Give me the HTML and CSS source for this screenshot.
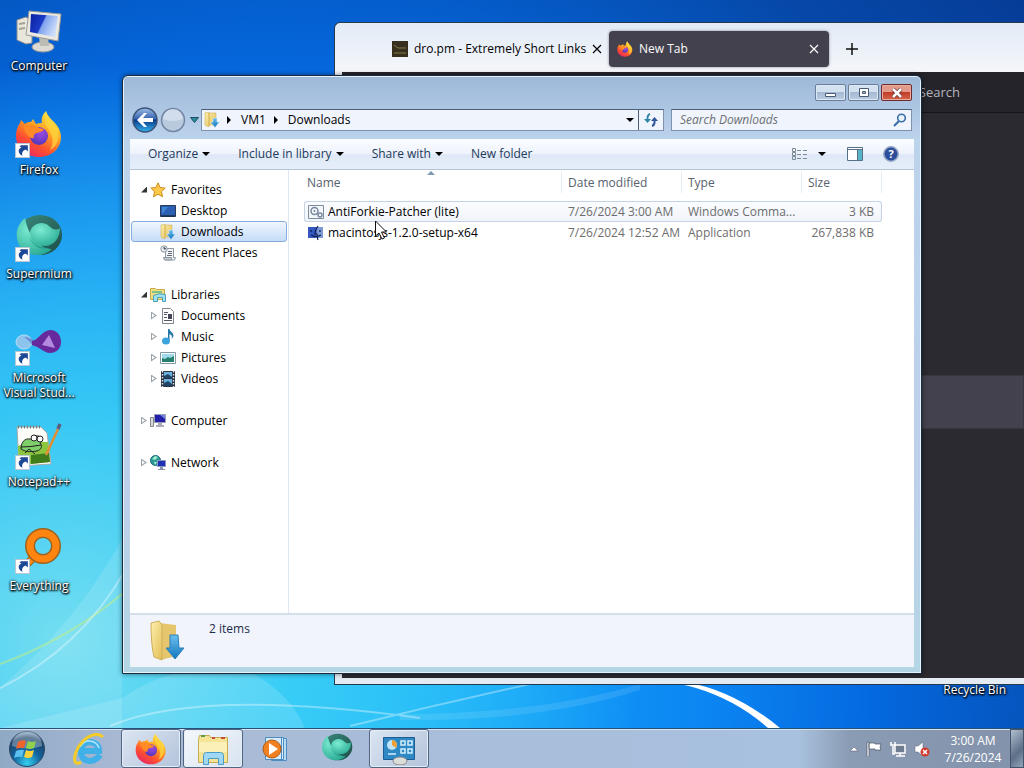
FILE: index.html
```
<!DOCTYPE html>
<html lang="en">
<head>
  <meta charset="UTF-8">
  <title>Downloads</title>
  <link rel="stylesheet" href="styles.css">
</head>
<body>
  <!-- shared icons -->
  <svg class="sprite" aria-hidden="true">
    <defs>
      <linearGradient id="g-fire" x1="0.8" y1="0" x2="0.2" y2="1">
        <stop offset="0" stop-color="#fff04a"/><stop offset="0.4" stop-color="#ffa022"/>
        <stop offset="0.7" stop-color="#ff4f30"/><stop offset="1" stop-color="#e5206c"/>
      </linearGradient>
      <radialGradient id="g-globe" cx="0.6" cy="0.3" r="0.8">
        <stop offset="0" stop-color="#a04be0"/><stop offset="1" stop-color="#4a35b8"/>
      </radialGradient>
      <radialGradient id="g-teal" cx="0.35" cy="0.3" r="0.8">
        <stop offset="0" stop-color="#7cecd2"/><stop offset="1" stop-color="#27a892"/>
      </radialGradient>
      <linearGradient id="g-dark" x1="0" y1="0" x2="1" y2="1">
        <stop offset="0" stop-color="#3a8a7c"/><stop offset="1" stop-color="#1d4c48"/>
      </linearGradient>
      <linearGradient id="g-folder" x1="0" y1="0" x2="1" y2="1">
        <stop offset="0" stop-color="#fdf0ae"/><stop offset="1" stop-color="#e3bd56"/>
      </linearGradient>
      <linearGradient id="g-arrow" x1="0" y1="0" x2="0" y2="1">
        <stop offset="0" stop-color="#6cc0ee"/><stop offset="1" stop-color="#1276c0"/>
      </linearGradient>
      <linearGradient id="g-screen" x1="0" y1="0" x2="1" y2="0.4">
        <stop offset="0" stop-color="#0a1fa0"/><stop offset="0.5" stop-color="#1c3cc8"/>
        <stop offset="0.55" stop-color="#7fa2ec"/><stop offset="1" stop-color="#c9dcfa"/>
      </linearGradient>
      <radialGradient id="g-orb" cx="0.5" cy="0.9" r="0.9">
        <stop offset="0" stop-color="#35d0f0"/><stop offset="0.45" stop-color="#12609c"/>
        <stop offset="0.8" stop-color="#1d4468"/><stop offset="1" stop-color="#8fb0cc"/>
      </radialGradient>
      <linearGradient id="g-back" x1="0" y1="0" x2="0" y2="1">
        <stop offset="0" stop-color="#9dbce6"/><stop offset="0.45" stop-color="#3564b0"/>
        <stop offset="0.5" stop-color="#0c3a8c"/><stop offset="1" stop-color="#30b4ee"/>
      </linearGradient>
    </defs>
    <symbol id="firefox" viewBox="0 0 48 48">
      <path fill="url(#g-fire)" d="M31 1c1 4 4 7 8 11 4 4 7 9 7 15 0 11-9 20-22 20S1 38 1 26c0-5 1-9 4-13l1-3 4 4c2-2 4-2 6-2l2-3 3 5c2-1 4-1 6-1-1-5 1-9 4-12z"/>
      <circle cx="24" cy="26" r="9" fill="url(#g-globe)"/>
      <path fill="#ff8a26" d="M8 16c5-2 12-2 16 2l5 1c-1 3-5 3-8 4-1 1-3 2-2 5-4 1-9-4-11-12z"/>
      <path fill="#ffd83e" opacity=".7" d="M31 3c1 5 9 9 12 17 2 8-1 17-8 20 3-5 4-12 0-18-3-5-7-10-4-19z"/>
    </symbol>
    <symbol id="supermium" viewBox="0 0 48 48">
      <ellipse cx="25" cy="21" rx="22" ry="20" fill="url(#g-dark)"/>
      <path fill="url(#g-teal)" d="M10 4c2 9 4 16 12 24 5 5 10 7 15 7-8 8-22 8-30 0C-1 26 0 12 10 4z"/>
      <path fill="url(#g-teal)" d="M15 18c2-8 12-12 19-6 3 3 7 5 11 2 0 10-6 18-15 18-10 0-15-6-15-14z"/>
      <path fill="#0d7768" opacity=".4" d="M13 20c3 9 12 16 22 12-6 6-18 2-22-12z"/>
    </symbol>
    <symbol id="shortcut" viewBox="0 0 14 14">
      <path fill="#fff" stroke="#b9c6d6" d="M.5.5h13v13H.5z"/>
      <path fill="#1b4796" d="M6 2h6v6l-2-2c-3 1-4 3-3 6-4-2-5-6-1-8L4 3z"/>
    </symbol>
    <symbol id="folder-down" viewBox="0 0 16 16">
      <path fill="url(#g-folder)" stroke="#c9a548" stroke-width=".5" d="M1 1l4-1v15l-4-2zM5 1h7v12H5z"/>
      <path fill="url(#g-arrow)" stroke="#e4f2fc" stroke-width=".5" d="M9 6h4v4h2.500l-4.500 5.500L6.500 10H9z"/>
    </symbol>
    <symbol id="computer" viewBox="0 0 48 48">
      <path fill="#e9e6dc" stroke="#8d8f92" d="M2 14l9-3 6 4v22l-6 1-9-4z"/>
      <path stroke="#a5a294" stroke-width="2" d="M4 18l6-1M4 23l6-1"/>
      <ellipse cx="28" cy="41" rx="11" ry="5" fill="#dcdad2" stroke="#999"/>
      <path fill="#bdbcb4" d="M24 31h9l1 9h-9z"/>
      <path fill="#ece9e0" stroke="#9a9a98" d="M14 5l32 3-3 27-32-6z"/>
      <path fill="url(#g-screen)" d="M16 8l27 2-3 21-25-5z"/>
    </symbol>
    <symbol id="close-x" viewBox="0 0 10 10">
      <path stroke="currentColor" stroke-width="1.200" d="M1 1l8 8M9 1L1 9"/>
    </symbol>
  </svg>

  <div class="desktop">
    <svg class="wallpaper" viewBox="0 0 1024 730" preserveAspectRatio="none" aria-hidden="true">
      <path fill="#fff" opacity=".12" d="M0 690Q80 620 122 540V730H0z"/>
      <path fill="#fff" opacity=".14" d="M122 700Q180 660 250 674Q290 695 305 730H0z"/>
      <path fill="none" stroke="#b8ec90" stroke-width="2" opacity=".6" d="M0 666Q70 640 124 594"/>
      <path fill="none" stroke="#fff" stroke-width="2" opacity=".35" d="M0 690Q80 650 124 574M110 728Q200 690 420 720M350 728Q440 706 530 686"/>
      <path fill="#fff" opacity=".1" d="M400 716Q540 716 640 686v6Q540 724 400 722z"/>
      <path fill="#fff" d="M668 684h18q48 8 94 46h-12q-32-28-72-40q-12-4-28-6z"/>
    </svg>

    <ul class="icons">
      <li><a class="icon" href="#"><svg class="icon-art"><use href="#computer"/></svg><span>Computer</span></a></li>
      <li><a class="icon" href="#"><svg class="icon-art"><use href="#firefox"/><use href="#shortcut" y="33" width="15" height="15"/></svg><span>Firefox</span></a></li>
      <li><a class="icon" href="#"><svg class="icon-art"><use href="#supermium"/><use href="#shortcut" y="33" width="15" height="15"/></svg><span>Supermium</span></a></li>
      <li><a class="icon" href="#">
        <svg class="icon-art" viewBox="0 0 48 48">
          <ellipse cx="9" cy="24" rx="8" ry="7" fill="#8cc4ee" stroke="#b4dcf6"/>
          <path fill="#6a8fd4" d="M9 19q8 0 13 7l-4 2q-4-6-9-9z"/>
          <path fill="#672a9c" d="M17 23c7-1 9-10 18-11 7 0 11 5 11 12s-5 11-11 11-10-6-18-8z"/>
          <path fill="#b48ae0" d="M34 17l-7 10 13 3z"/>
          <use href="#shortcut" y="33" width="15" height="15"/>
        </svg><span>Microsoft<br>Visual Stud...</span></a></li>
      <li><a class="icon" href="#">
        <svg class="icon-art" viewBox="0 0 48 48">
          <path fill="#fdfdfa" stroke="#a9a9a9" d="M2 5h24l6 6 4 31-32 2z"/>
          <path fill="#8cc63e" d="M3 24q15-5 30-4l2 20-31 3z"/>
          <path fill="#3f7d1c" d="M16 33l18-2 1 9-19 2z"/>
          <path stroke="#777" stroke-dasharray="1 2" stroke-width="3" d="M3 5h23"/>
          <path fill="#7fcf6a" stroke="#222" d="M6 27c0-9 6-12 12-9l3-4c5-1 6 4 4 7 3 3 1 7-3 8-8 1-11 1-16-2z"/>
          <path fill="none" stroke="#222" d="M6 25q10 0 20-2M10 31l4-4 6 5"/>
          <circle cx="19" cy="16" r="3" fill="#fff" stroke="#222"/><circle cx="25" cy="17" r="3" fill="#fff" stroke="#222"/>
          <path stroke="#e09030" stroke-width="2.500" d="M31 33L43 7"/><path stroke="#5a5f80" stroke-width="3.500" d="M43 7l2-5"/>
          <use href="#shortcut" y="33" width="15" height="15"/>
        </svg><span>Notepad++</span></a></li>
      <li><a class="icon" href="#">
        <svg class="icon-art" viewBox="0 0 48 48">
          <path stroke="#a85a08" stroke-width="8" d="M12 38l8-8"/><path stroke="#ff8a10" stroke-width="6" d="M11 39l9-9"/>
          <circle cx="28" cy="20" r="13" fill="none" stroke="#9c6220" stroke-width="10"/>
          <circle cx="28" cy="20" r="13" fill="none" stroke="#ff8510" stroke-width="7"/>
          <use href="#shortcut" y="33" width="15" height="15"/>
        </svg><span>Everything</span></a></li>
    </ul>
    <a class="icon recycle" href="#">Recycle Bin</a>

    <!-- browser window, partly behind the explorer -->
    <section class="browser">
      <div class="tabs">
        <div class="tab">
          <svg class="i16" viewBox="0 0 16 16"><path fill="#37301f" d="M0 0h16v16H0z"/><path fill="none" stroke="#8a7a48" d="M2 4l4 3h8M2 12h12"/></svg>
          <span class="tab-title">dro.pm - Extremely Short Links</span>
          <button class="tab-close" aria-label="Close tab"><svg class="i10"><use href="#close-x"/></svg></button>
        </div>
        <div class="tab active">
          <svg class="i16"><use href="#firefox"/></svg>
          <span class="tab-title">New Tab</span>
          <button class="tab-close" aria-label="Close tab"><svg class="i10"><use href="#close-x"/></svg></button>
        </div>
        <button class="tab-new" aria-label="New tab"><svg class="i12" viewBox="0 0 12 12"><path stroke="#111" stroke-width="1.500" d="M6 0v12M0 6h12"/></svg></button>
      </div>
      <div class="page">
        <div class="page-bar"><span>Search</span></div>
        <div class="page-band"></div>
      </div>
    </section>

    <!-- explorer window -->
    <section class="explorer">
      <div class="caption">
        <button class="cap" aria-label="Minimize"><svg class="cap-art" viewBox="0 0 14 10"><path fill="#fff" stroke="#4a5a74" d="M1.500 5.500h10v3h-10z"/></svg></button>
        <button class="cap" aria-label="Maximize"><svg class="cap-art" viewBox="0 0 14 10"><path fill="#fff" fill-rule="evenodd" stroke="#4a5a74" d="M2.500.5h9v8h-9zM5.500 3.500h3v2h-3z"/></svg></button>
        <button class="cap cap-close" aria-label="Close"><svg class="cap-art" viewBox="0 0 14 10"><path stroke="#6b3030" stroke-width="4" d="M3 1l8 8M11 1L3 9"/><path stroke="#fff" stroke-width="2.500" d="M3 1l8 8M11 1L3 9"/></svg></button>
      </div>

      <div class="nav">
        <button class="round" aria-label="Back"><svg class="i26" viewBox="0 0 26 26"><circle cx="13" cy="13" r="12" fill="url(#g-back)" stroke="#3b5377" stroke-width="1.500"/><path fill="#fff" d="M5 13l7-7h3l-4 5h10v4H11l4 5h-3z"/></svg></button>
        <button class="round" aria-label="Forward"><svg class="i26" viewBox="0 0 26 26"><circle cx="13" cy="13" r="11.500" fill="#b9cadf" stroke="#7285a0" stroke-width="1.500"/><path fill="#dbe5f1" opacity=".7" d="M3 12a10 10 0 0 1 20 0q-10 4-20 0z"/></svg></button>
        <button class="recent" aria-label="Recent pages"><svg class="i9" viewBox="0 0 9 6"><path fill="#2b8a9a" stroke="#1c4f66" d="M.5.5h8l-4 5z"/></svg></button>
        <div class="address">
          <svg class="i16"><use href="#folder-down"/></svg>
          <button class="crumb crumb-arrow" aria-label="Places"><svg class="i8" viewBox="0 0 8 8"><path d="M2 0l4 4-4 4z"/></svg></button>
          <button class="crumb">VM1</button>
          <button class="crumb crumb-arrow" aria-label="Folders in VM1"><svg class="i8" viewBox="0 0 8 8"><path d="M2 0l4 4-4 4z"/></svg></button>
          <button class="crumb">Downloads</button>
          <button class="crumb previous" aria-label="Previous locations"><svg class="i8" viewBox="0 0 8 8"><path d="M0 2h8L4 6z"/></svg></button>
          <button class="refresh" aria-label="Refresh"><svg class="i14" viewBox="0 0 14 14"><path fill="none" stroke="#2f86a8" stroke-width="2" d="M6 1Q3 2 3.500 7"/><path fill="#2f86a8" d="M0 6h7L3.500 10z"/><path fill="none" stroke="#30579e" stroke-width="2" d="M8 13q3-1 2.500-6"/><path fill="#30579e" d="M7 8h7l-3.500-4z"/></svg></button>
        </div>
        <div class="search">
          <input type="text" aria-label="Search Downloads" placeholder="Search Downloads">
          <svg class="i14" viewBox="0 0 14 14"><circle cx="8.500" cy="5" r="3.800" fill="#e8f4fc" stroke="#3a6ea8" stroke-width="1.600"/><path stroke="#3a6ea8" stroke-width="2.200" d="M6 8l-5 5"/></svg>
        </div>
      </div>

      <div class="frame">
        <div class="toolbar">
          <button class="tool">Organize <svg class="i8" viewBox="0 0 8 8"><path d="M0 2h8L4 6z"/></svg></button>
          <button class="tool">Include in library <svg class="i8" viewBox="0 0 8 8"><path d="M0 2h8L4 6z"/></svg></button>
          <button class="tool">Share with <svg class="i8" viewBox="0 0 8 8"><path d="M0 2h8L4 6z"/></svg></button>
          <button class="tool">New folder</button>
          <div class="tool-right">
            <button class="tool-icon" aria-label="Change view"><svg class="i16" viewBox="0 0 16 16"><path fill="none" stroke="#7c8b96" d="M.5 2.500h3v3h-3zM.5 6.500h3v3h-3zM.5 10.500h3v3h-3zM5 4.500h4M11 4.500h4M5 8.500h4M11 8.500h4M5 12.500h4M11 12.500h4"/></svg></button>
            <button class="tool-icon" aria-label="View options"><svg class="i8" viewBox="0 0 8 8"><path d="M0 2h8L4 6z"/></svg></button>
            <button class="tool-icon wide" aria-label="Preview pane"><svg class="i16" viewBox="0 0 16 16"><path fill="#fff" stroke="#567088" d="M.5 1.500h15v13H.5z"/><path fill="#5ab4c8" d="M11 4h4v10h-4z"/><path stroke="#567088" d="M1 3.500h14M10.500 4v10"/></svg></button>
            <button class="tool-icon" aria-label="Help"><svg class="i16" viewBox="0 0 16 16"><circle cx="8" cy="8" r="7.200" fill="#2c4c9c" stroke="#93a4c4" stroke-width="1.500"/><text class="help" x="8" y="12" text-anchor="middle">?</text></svg></button>
          </div>
        </div>

        <div class="body">
          <nav class="tree">
            <ul>
              <li><a href="#"><i class="open"></i><svg class="i16" viewBox="0 0 16 16"><path fill="#fbc84a" stroke="#d08a20" d="M8 .8l2.200 4.700 5 .6-3.700 3.500 1 5.100L8 12.200l-4.500 2.500 1-5.100L.8 6.100l5-.6z"/></svg>Favorites</a></li>
              <li class="sub"><a href="#"><svg class="i16" viewBox="0 0 16 16"><path fill="#2a5fb4" stroke="#27395c" d="M.5 2.500h15v11H.5z"/><path fill="#3f86d0" d="M2 4h6L3 10H2z"/><path stroke="#1d2c48" stroke-width="1.500" d="M1 13h14"/></svg>Desktop</a></li>
              <li class="sub"><a href="#" class="selected"><svg class="i16"><use href="#folder-down"/></svg>Downloads</a></li>
              <li class="sub"><a href="#"><svg class="i16" viewBox="0 0 16 16"><path fill="#f2f4f6" stroke="#8e98a2" d="M5.500 3.500h8v9h2l-1 2.500h-9z"/><path fill="#c2c9d0" stroke="#8e98a2" d="M3.500 12.500h8v2.500h-7z"/><circle cx="4" cy="4" r="3.200" fill="#e7ebef" stroke="#8e98a2"/><path stroke="#667" d="M4 2v2h2M8 6.500h4M8 8.500h4M7 10.500h5"/></svg>Recent Places</a></li>
            </ul>
            <ul>
              <li><a href="#"><i class="open"></i><svg class="i16" viewBox="0 0 16 16"><path fill="#f4dd80" stroke="#c8ac50" d="M.5 1.500h5l1 1h8v10H.5z"/><path fill="#7cc48a" d="M2 4h10v2H2z"/><path fill="#9fe0ee" stroke="#4ca0b8" d="M3.500 14.500v-6q5-3 12-1v7h-3v-4h-5v4z"/></svg>Libraries</a></li>
              <li class="sub"><a href="#"><i></i><svg class="i16" viewBox="0 0 16 16"><path fill="#fcfcfc" stroke="#7f868e" d="M2.500.5h8l3 3v12h-11z"/><path stroke="#556" d="M4 4.500h4M4 6.500h3M4 9.500h3M4 12.500h8"/><path fill="#445" d="M8 6h4v5H8z"/></svg>Documents</a></li>
              <li class="sub"><a href="#"><i></i><svg class="i16" viewBox="0 0 16 16"><path fill="#2878a8" d="M8 0h1.500c.5 3 4 3 4 7-.5 1-1 2-2 3 1-3 0-4-2-5v7H8z"/><ellipse cx="6" cy="12" rx="4" ry="3.500" fill="#3ba4dc"/></svg>Music</a></li>
              <li class="sub"><a href="#"><i></i><svg class="i16" viewBox="0 0 16 16"><path fill="#fff" stroke="#7f98a4" d="M.5 2.500h15v11H.5z"/><path fill="#a0d8ec" d="M2 4h12v8H2z"/><path fill="#26806e" d="M2 8l3 1 3-2 2 1 4-2v6H2z"/></svg>Pictures</a></li>
              <li class="sub"><a href="#"><i></i><svg class="i16" viewBox="0 0 16 16"><path fill="#2a3440" d="M1 0h14v16H1z"/><path fill="#6ab0dc" d="M4 1h8v6H4zM4 8h8v7H4z"/><path fill="#1f4468" d="M4 5l4-2 4 3v1H4zM4 12l4-2 4 3v2H4z"/><path stroke="#dde" stroke-width="1.500" stroke-dasharray="1.500 1.500" d="M2.500 0v16M13.500 0v16"/></svg>Videos</a></li>
            </ul>
            <ul>
              <li><a href="#"><i></i><svg class="i16" viewBox="0 0 16 16"><path fill="#d8dadd" stroke="#888" d="M.5 4.500h3v9h-3z"/><path fill="#241fa8" stroke="#9aa0b4" d="M4.500 1.500h11v8h-11z"/><path fill="#7384e0" d="M10 2h5v4z"/><path fill="#aab" d="M8 10h4v2h2v2H6v-2h2z"/></svg>Computer</a></li>
            </ul>
            <ul>
              <li><a href="#"><i></i><svg class="i16" viewBox="0 0 16 16"><circle cx="5.500" cy="5.500" r="5" fill="#2a9a94" stroke="#1d6a80"/><path fill="#a4ecd0" d="M2 4l3-3 3 1-3 3zM4 7l3 0-2 3z"/><path fill="#1e30b4" stroke="#8a98c0" d="M7.500 5.500h8v6h-8z"/><path fill="#8a93a8" d="M10 12h3v2h2v1H8v-1h2z"/></svg>Network</a></li>
            </ul>
          </nav>

          <div class="files">
            <svg class="sort" viewBox="0 0 8 4"><path fill="#7c9ab4" d="M0 4l4-4 4 4z"/></svg>
            <table>
              <colgroup><col class="c-name"><col class="c-date"><col class="c-type"><col class="c-size"></colgroup>
              <thead>
                <tr><th>Name</th><th>Date modified</th><th>Type</th><th>Size</th></tr>
              </thead>
              <tbody>
                <tr class="hover">
                  <td><svg class="i16" viewBox="0 0 16 16"><path fill="#f4f7fa" stroke="#7c8c9c" d="M.5 1.500h15v13H.5z"/><circle cx="6.500" cy="7" r="3.500" fill="none" stroke="#7888a0" stroke-width="1.500"/><circle cx="6.500" cy="7" r="1" fill="#7888a0"/><circle cx="12" cy="11" r="2" fill="none" stroke="#7888a0" stroke-width="1.500"/></svg>AntiForkie-Patcher (lite)</td>
                  <td>7/26/2024 3:00 AM</td><td>Windows Comma...</td><td>3 KB</td>
                </tr>
                <tr>
                  <td><svg class="i16" viewBox="0 0 16 16"><path fill="#3558c0" d="M0 2h9v11H0z"/><path fill="#7c9ad4" d="M9 2h6v11H8z"/><path fill="none" stroke="#101c50" stroke-width="1.200" d="M10 1Q7 5 7 9h2q0 4 1 6M3 5v2M12 5v2M3 10q5 3 10 0"/></svg>macintosjs-1.2.0-setup-x64</td>
                  <td>7/26/2024 12:52 AM</td><td>Application</td><td>267,838 KB</td>
                </tr>
              </tbody>
            </table>
          </div>
        </div>

        <div class="details">
          <svg class="details-art" viewBox="0 0 36 42">
            <path fill="#e6c66c" d="M9 3l17 2v31l-15 4z"/>
            <path fill="url(#g-folder)" stroke="#cfae5c" d="M1 3l8-2 3 4v35l-8-3q-3-12-3-34z"/>
            <path fill="url(#g-arrow)" stroke="#2c80b8" d="M20 15h8l1 13h5l-9 11-9-11h4z"/>
          </svg>
          <span>2 items</span>
        </div>
      </div>
    </section>

    <svg class="cursor" viewBox="0 0 12 20" aria-hidden="true"><path fill="#fff" stroke="#111" d="M.5 1v15l3.500-3 3 6 2.500-1-3-6h5z"/></svg>
  </div>

  <footer class="taskbar">
    <button class="start" aria-label="Start">
      <svg class="i38" viewBox="0 0 38 38"><circle cx="19" cy="19" r="17.500" fill="url(#g-orb)" stroke="#2c4666"/><path fill="#fff" opacity=".3" d="M4 16a15 15 0 0 1 30 0q-15 5-30 0z"/>
        <path fill="#f0642c" d="M10 12q4-3 8-1l-2 7q-4-1-8 1z"/><path fill="#8fd04c" d="M20 11q4 2 8 0l-2 7q-4 2-8 0z"/><path fill="#5cc0f0" d="M8 21q4-2 8-1l-2 7q-4-1-8 1z"/><path fill="#fcd23c" d="M18 20q4 2 8 0l-2 7q-4 2-8 0z"/></svg>
    </button>
    <button class="task" aria-label="Internet Explorer"><svg class="i32" viewBox="0 0 32 32"><path fill="none" stroke="#3fb0e8" stroke-width="6" d="M27 22q-4 6-11 6-8-1-8-10 1-9 9-9 9 1 9 9H9"/><path fill="none" stroke="#b4e8fc" stroke-width="1.500" d="M7 14q4-7 10-6 7 1 9 7"/><path fill="none" stroke="#f3cc28" stroke-width="3" d="M30 4C25-1 16 2 10 8S-1 26 3 30q2 1 5-1"/></svg></button>
    <button class="task running" aria-label="Firefox"><svg class="i32"><use href="#firefox"/></svg></button>
    <button class="task running front" aria-label="Windows Explorer"><svg class="i36" viewBox="0 0 36 32"><path fill="#f6e496" stroke="#c9ac52" d="M3.500 6.500l1-4h10l1 2h17v25h-29z"/><path stroke="#5a9c4c" stroke-width="2" d="M6 3h4"/><path stroke="#c84c3c" stroke-width="2" d="M17 5h3M26 5h4"/><path fill="#fbf0b8" d="M4 9h28v10H4z"/><path fill="#9fd8f4" stroke="#4c9ac8" d="M8.500 31.500v-9q0-3 3-3h14q3 0 3 3v9h-5v-6h-10v6z"/></svg></button>
    <button class="task" aria-label="Media Player"><svg class="i32" viewBox="0 0 32 32"><path fill="#b8dcf4" stroke="#4c8cc0" d="M12.500 5.500h15v22h-15z"/><path fill="#d6ecfa" stroke="#4c8cc0" d="M6.500 4.500h18v22h-18z"/><path stroke="#4c8cc0" d="M22.500 5v21"/><circle cx="13" cy="16" r="9" fill="#f08020" stroke="#b05c18"/><path fill="#fff" d="M10 10l9 6-9 6z"/></svg></button>
    <button class="task" aria-label="Supermium"><svg class="i34"><use href="#supermium"/></svg></button>
    <button class="task running" aria-label="Control Panel"><svg class="i34" viewBox="0 0 34 32"><path fill="#2e88c4" stroke="#1c5c94" d="M1.500 4.500h31v22h-31z"/><circle cx="10" cy="12" r="5" fill="#bfe4f8"/><path fill="#f0a030" d="M10 12V7a5 5 0 0 1 4 8z"/><path fill="none" stroke="#d4eefc" stroke-width="1.500" d="M19 8h4v4h-4zM26 8h4v4h-4zM19 16h4v4h-4zM26 16h4v4h-4zM6 21h8"/><ellipse cx="18" cy="28" rx="7" ry="4" fill="#dcdcd8" stroke="#888"/></svg></button>

    <div class="tray">
      <button class="tray-btn" aria-label="Show hidden icons"><svg class="i8" viewBox="0 0 8 8"><path fill="#fff" stroke="#556" stroke-width=".5" d="M0 6l4-4 4 4z"/></svg></button>
      <button class="tray-btn" aria-label="Action Center"><svg class="i16" viewBox="0 0 16 16"><path fill="#fff" stroke="#4a5464" stroke-width=".7" d="M1 1h2v15H1zM3 2h6v1h6l-1 3 1 3H9V8H3z"/></svg></button>
      <button class="tray-btn" aria-label="Network"><svg class="i16" viewBox="0 0 16 16"><path fill="#6d7c90" stroke="#fff" stroke-width="1.500" d="M5 4h10v8H5z"/><path stroke="#fff" stroke-width="1.500" d="M10 12v3M6 15h9M1 1v4M5 1v4M1 4h4"/><path fill="none" stroke="#fff" stroke-width="1.500" d="M3 5v8h2"/></svg></button>
      <button class="tray-btn" aria-label="Volume muted"><svg class="i16" viewBox="0 0 16 16"><path fill="#fff" stroke="#667" stroke-width=".5" d="M1 5h3l5-4v14l-5-4H1z"/><circle cx="11" cy="11" r="4.500" fill="#d23a30"/><path stroke="#fff" stroke-width="1.500" d="M9 9l4 4M13 9l-4 4"/></svg></button>
      <time class="clock" datetime="2024-07-26T03:00">3:00 AM<br>7/26/2024</time>
      <button class="show-desktop" aria-label="Show desktop"></button>
    </div>
  </footer>
</body>
</html>
```
FILE: styles.css
```
* {
  margin: 0;
  padding: 0;
  box-sizing: border-box;
}
body {
  display: flex;
  flex-direction: column;
  height: 100vh;
  overflow: hidden;
  font-family: "Open Sans", "Noto Sans", sans-serif;
  font-size: 12px;
  line-height: 16px;
  color: #000;
}
button {
  border: 0;
  background: none;
  font: inherit;
  color: inherit;
}
a {
  color: inherit;
  text-decoration: none;
}
ul {
  list-style: none;
}
svg {
  display: block;
  flex: none;
}
.sprite {
  position: absolute;
  width: 0;
  height: 0;
}

/* icon sizes */
.i8 { width: 8px; height: 8px; }
.i9 { width: 9px; height: 6px; }
.i10 { width: 10px; height: 10px; }
.i12 { width: 12px; height: 12px; }
.i14 { width: 14px; height: 14px; }
.i16 { width: 16px; height: 16px; }
.i26 { width: 26px; height: 26px; }
.i32 { width: 32px; height: 32px; }
.i34 { width: 34px; height: 32px; }
.i36 { width: 36px; height: 34px; }
.i38 { width: 38px; height: 38px; }

/* desktop */
.desktop {
  position: relative;
  flex: 1;
  overflow: hidden;
  background:
    radial-gradient(circle at 6% 88%, rgba(125, 228, 240, 0.9) 0, rgba(60, 208, 245, 0.85) 20%, rgba(20, 160, 240, 0) 50%),
    radial-gradient(circle at 26% 94%, #20bcfc 0, #14a4fa 20%, #0b84f2 44%, #0468de 60%, #0648a8 84%, #063c98 100%);
}
.wallpaper {
  position: absolute;
  width: 100%;
  height: 100%;
}
.icons {
  position: relative;
  width: 78px;
  padding-top: 6px;
}
.icons li {
  height: 104px;
}
.icon {
  display: flex;
  flex-direction: column;
  align-items: center;
  gap: 4px;
  text-align: center;
  line-height: 15px;
  white-space: nowrap;
  color: #fff;
  text-shadow: 0 1px 2px #000, 1px 1px 2px #000, 0 0 3px #000;
}
.icon-art {
  width: 48px;
  height: 48px;
}
.recycle {
  position: absolute;
  right: 18px;
  bottom: 31px;
}

/* browser */
.browser {
  position: absolute;
  top: 22px;
  right: 0;
  bottom: 43px;
  left: 334px;
  display: flex;
  flex-direction: column;
  padding: 3px 0 6px 7px;
  border: 1px solid #26384e;
  border-right: 0;
  border-radius: 6px 0 0 0;
  background: linear-gradient(#e2ebf6, #f4f6fa 48px, #e4ebf3);
}
.tabs {
  display: flex;
  align-items: center;
  height: 46px;
  padding-left: 42px;
}
.tab {
  display: flex;
  align-items: center;
  gap: 6px;
  width: 220px;
  height: 36px;
  padding: 0 10px 0 8px;
  border-radius: 4px;
}
.tab.active {
  margin-left: 5px;
  background: #42414d;
  color: #fbfbfe;
  box-shadow: 0 0 3px #889;
}
.tab-title {
  flex: 1;
  white-space: nowrap;
}
.tab-close,
.tab-new {
  display: flex;
  align-items: center;
  justify-content: center;
}
.tab-new {
  margin-left: 17px;
}
.page {
  flex: 1;
  background: #2b2a30;
}
.page-bar {
  display: flex;
  align-items: center;
  justify-content: flex-end;
  height: 41px;
  padding-right: 64px;
  border-bottom: 1px solid #151419;
  background: #25242b;
  font-size: 13px;
  color: #b4b4bc;
}
.page-band {
  height: 54px;
  margin-top: 262px;
  border: 1px solid #38373f;
  background: #42414d;
}

/* explorer */
.explorer {
  position: absolute;
  top: 75px;
  right: 102px;
  bottom: 54px;
  left: 122px;
  display: flex;
  flex-direction: column;
  padding: 0 7px 6px;
  border: 1px solid #1b2c40;
  border-radius: 6px 6px 0 0;
  background: linear-gradient(#9db8d8, #bcd3ec 64px, #bdd0ea 70%, #b4d6e4);
  box-shadow: inset 0 0 0 1px #e4f2fb, 0 0 5px rgba(0, 0, 0, 0.5);
}
.caption {
  display: flex;
  justify-content: flex-end;
  gap: 2px;
  height: 31px;
  padding: 8px 2px 0 0;
}
.cap {
  display: flex;
  align-items: center;
  justify-content: center;
  width: 31px;
  height: 17px;
  border: 1px solid #6a7d99;
  border-radius: 2px;
  background: linear-gradient(#d3e0f0 50%, #a5b9d3 50%, #bccde3);
  box-shadow: inset 0 0 0 1px #dce8f4;
}
.cap-close {
  border-color: #6e2a2a;
  background: linear-gradient(#e29a8a 45%, #c23c28 50%, #d4684c);
  box-shadow: inset 0 0 0 1px #e8aca0;
}
.cap-art {
  width: 14px;
  height: 10px;
}
.nav {
  display: flex;
  align-items: center;
  height: 32px;
  padding: 0 2px 6px;
}
.round {
  width: 28px;
}
.recent {
  display: flex;
  justify-content: center;
  width: 13px;
}
.address,
.search {
  display: flex;
  align-items: center;
  height: 22px;
  border: 1px solid #7c92ae;
  border-top-color: #4c5f7a;
  background: #f0f4fc;
}
.address {
  flex: 1;
  padding-left: 2px;
}
.crumb {
  padding: 0 4px;
}
.crumb-arrow {
  padding: 0 4px 0 5px;
}
.crumb + .crumb-arrow {
  padding-left: 2px;
}
.previous {
  margin-left: auto;
}
.refresh {
  display: flex;
  align-items: center;
  justify-content: center;
  width: 25px;
  height: 20px;
  border-left: 1px solid #4c5f7a;
}
.search {
  width: 241px;
  margin-left: 7px;
  padding: 0 4px 0 8px;
}
.search input {
  flex: 1;
  min-width: 0;
  border: 0;
  outline: 0;
  background: none;
  font: inherit;
}
.search input::placeholder {
  font-style: italic;
  color: #6c6f74;
  opacity: 1;
}
.frame {
  flex: 1;
  display: flex;
  flex-direction: column;
  min-height: 0;
  background: #fff;
}
.toolbar {
  display: flex;
  align-items: center;
  gap: 28px;
  height: 31px;
  padding: 0 15px 0 18px;
  border-bottom: 1px solid #b6c4d8;
  background: linear-gradient(#fbfdff, #eef3fc 48%, #dfe8f6 52%, #e6eefa);
  color: #1e395b;
}
.tool,
.tool-icon {
  display: flex;
  align-items: center;
  gap: 4px;
}
.tool-right {
  display: flex;
  align-items: center;
  gap: 10px;
  margin-left: auto;
}
.tool-icon.wide {
  margin: 0 10px 0 11px;
}
.help {
  font-size: 11px;
  font-weight: bold;
  fill: #fff;
}
.body {
  flex: 1;
  display: flex;
  min-height: 0;
}
.tree {
  width: 159px;
  padding: 9px 1px 0;
  border-right: 1px solid #dfe8f2;
}
.tree ul {
  margin-bottom: 21px;
}
.tree a {
  display: flex;
  align-items: center;
  gap: 5px;
  height: 21px;
  padding-left: 9px;
  border: 1px solid transparent;
  border-radius: 3px;
}
.tree .sub a {
  padding-left: 19px;
}
.tree i {
  width: 6px;
  height: 8px;
  margin-right: -2px;
  background: #9aa2aa;
  clip-path: polygon(0 0, 100% 50%, 0 100%, 0 0, 1px 2px, 1px 6px, 4px 4px, 1px 2px);
}
.tree i.open {
  height: 6px;
  background: #333;
  clip-path: polygon(100% 0, 100% 100%, 0 100%);
}
.tree .sub a:not(:has(i)) {
  padding-left: 28px;
}
.tree .selected {
  border-color: #84acdd;
  background: linear-gradient(#f0f6fe, #c6dcf8);
}
.files {
  position: relative;
  flex: 1;
  padding: 2px 0 0 15px;
}
.sort {
  position: absolute;
  top: 1px;
  left: 138px;
  width: 8px;
  height: 4px;
}
table {
  table-layout: fixed;
  width: 578px;
  border-collapse: separate;
  border-spacing: 0;
}
.c-name { width: 258px; }
.c-date { width: 120px; }
.c-type { width: 120px; }
.c-size { width: 80px; }
th {
  height: 21px;
  padding: 0 6px;
  border-right: 1px solid #e4ecf4;
  text-align: left;
  font-weight: normal;
  color: #56616e;
}
th:first-child {
  padding-left: 3px;
}
tbody::before {
  content: "";
  display: block;
  height: 8px;
}
td {
  height: 21px;
  padding: 0 6px;
  border: 1px solid transparent;
  border-width: 1px 0;
  white-space: nowrap;
  color: #6d6d6d;
}
td:first-child {
  display: flex;
  align-items: center;
  gap: 4px;
  padding-left: 3px;
  border-left-width: 1px;
  color: #000;
}
td:last-child {
  text-align: right;
  padding-right: 7px;
  border-right-width: 1px;
}
.hover td {
  border-color: #c4d4e6;
  background: linear-gradient(#fbfcfe, #f0f4fa);
}
.hover td:first-child {
  border-radius: 3px 0 0 3px;
}
.hover td:last-child {
  border-radius: 0 3px 3px 0;
}
.details {
  display: flex;
  gap: 23px;
  height: 54px;
  padding: 5px 20px;
  border-top: 2px solid #d4dfec;
  background: #f1f4fb;
  color: #1e2d4b;
}
.details-art {
  width: 36px;
  height: 42px;
}
.details span {
  padding-top: 1px;
}
.cursor {
  position: absolute;
  top: 220px;
  left: 375px;
  width: 12px;
  height: 20px;
}

/* taskbar */
.taskbar {
  display: flex;
  gap: 2px;
  height: 40px;
  border-top: 1px solid #26527a;
  background: linear-gradient(90deg, #8fa9c5, #a9b9d4 12%, #a8bedb 45%, #a8c1de 78%, #8a9bb4 83%, #8292aa);
  box-shadow: inset 0 1px #d4e4f2;
}
.start,
.task {
  display: flex;
  align-items: center;
  justify-content: center;
}
.start {
  width: 57px;
  padding-right: 4px;
}
.task {
  width: 60px;
}
.task.running {
  border: 1px solid #4e6480;
  border-radius: 3px;
  background: linear-gradient(135deg, #dbe5f2, #b4c3db);
  box-shadow: inset 0 0 0 1px #e6eef8;
}
.task.front {
  background: linear-gradient(135deg, #f4f8fc, #d8e3f0);
}
.tray {
  display: flex;
  align-items: center;
  gap: 8px;
  margin-left: auto;
  color: #fff;
}
.clock {
  width: 62px;
  margin-left: 4px;
  text-align: center;
  line-height: 17px;
}
.show-desktop {
  align-self: stretch;
  width: 14px;
  margin-left: -2px;
  border: 1px solid #42536a;
  background: linear-gradient(135deg, #b0bfce, #5c6f86 60%, #93a5b8);
}
```
